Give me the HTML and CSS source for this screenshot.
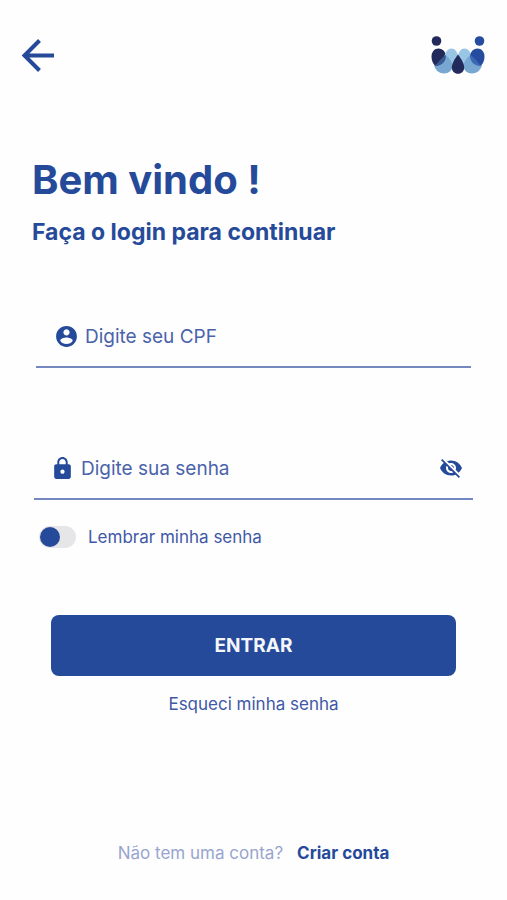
FILE: index.html
```html
<!DOCTYPE html>
<html lang="pt-BR">
<head>
  <meta charset="UTF-8">
  <meta name="viewport" content="width=device-width, initial-scale=1.0">
  <title>Login</title>
  <link rel="stylesheet" href="styles.css">
</head>
<body>
  <header class="topbar">
    <a href="#" class="back" aria-label="Voltar">
      <svg width="34" height="34" viewBox="0 0 34 34" fill="none" stroke="currentColor" stroke-width="4">
        <path d="M33 17.500H4M18.500 2.500L3.500 17.500L18.500 32.500"/>
      </svg>
    </a>
    <svg class="logo" width="54" height="40" viewBox="0 0 54 40" role="img" aria-label="iwi">
      <circle cx="5.500" cy="6" r="4.800" fill="#222a5c"/>
      <circle cx="48.500" cy="6" r="4.800" fill="#264c9f"/>
      <!-- pétalas de cima -->
      <path fill="#222a5c" d="M7.500 13.500C12 13.500 15 17.500 15 22C15 27 11 30.500 6.500 32.500C3 30.500 0.500 26.500 0.500 21.500C0.500 17 3.500 13.500 7.500 13.500Z"/>
      <path fill="#9ac6e6" d="M20.500 13.500C24 13.500 26.500 17 27 21.500L20 33L13 24C13.500 18 16.500 13.500 20.500 13.500Z"/>
      <path fill="#9ac6e6" d="M33.500 13.500C30 13.500 27.500 17 27 21.500L34 33L41 24C40.500 18 37.500 13.500 33.500 13.500Z"/>
      <path fill="#264c9f" d="M46.500 13.500C42 13.500 39 17.500 39 22C39 27 43 30.500 47.500 32.500C51 30.500 53.500 26.500 53.500 21.500C53.500 17 50.500 13.500 46.500 13.500Z"/>
      <!-- pétalas de baixo -->
      <path fill="#78a8d2" d="M14.800 20C19 23.500 21.500 27.500 21.500 31C21.500 35.500 17.500 38.500 13 38.500C8.500 38.500 4.500 35.500 3 30.500C9 31 14 28 14.800 20Z"/>
      <path fill="#78a8d2" d="M39.200 20C35 23.500 32.500 27.500 32.500 31C32.500 35.500 36.500 38.500 41 38.500C45.500 38.500 49.500 35.500 51 30.500C45 31 40 28 39.200 20Z"/>
      <path fill="#3a5b94" d="M14.800 20C15.500 26.500 11 31 3.200 31C7 28.500 9.500 23 14.800 20Z"/>
      <path fill="#3a6ab4" d="M39.200 20C38.500 26.500 43 31 50.800 31C47 28.500 44.500 23 39.200 20Z"/>
      <path fill="#222a5c" d="M27 19.500C30 23.500 33.200 28.500 33.200 32.500C33.200 36 30.500 38.800 27 38.800C23.500 38.800 20.800 36 20.800 32.500C20.800 28.500 24 23.500 27 19.500Z"/>
    </svg>
  </header>

  <main class="content">
    <h1>Bem vindo !</h1>
    <h2>Faça o login para continuar</h2>

    <form class="login">
      <div class="field">
        <label for="cpf" aria-label="CPF">
          <svg width="25" height="25" viewBox="0 0 24 24" fill="currentColor">
            <path d="M12 2C6.480 2 2 6.480 2 12s4.480 10 10 10 10-4.480 10-10S17.520 2 12 2zm0 3c1.660 0 3 1.340 3 3s-1.340 3-3 3-3-1.340-3-3 1.340-3 3-3zm0 14.200c-2.500 0-4.710-1.280-6-3.220.03-1.990 4-3.080 6-3.080 1.990 0 5.970 1.090 6 3.080-1.290 1.940-3.500 3.220-6 3.220z"/>
          </svg>
        </label>
        <input type="text" id="cpf" name="cpf" placeholder="Digite seu CPF">
      </div>

      <div class="field field-senha">
        <label for="senha" aria-label="Senha">
          <svg width="25" height="25" viewBox="0 0 24 24" fill="currentColor">
            <path d="M18 8h-1V6c0-2.760-2.240-5-5-5S7 3.240 7 6v2H6c-1.100 0-2 .9-2 2v10c0 1.100.9 2 2 2h12c1.100 0 2-.9 2-2V10c0-1.100-.9-2-2-2zm-6 9c-1.100 0-2-.9-2-2s.9-2 2-2 2 .9 2 2-.9 2-2 2zm3.100-9H8.900V6c0-1.710 1.390-3.100 3.100-3.100 1.710 0 3.100 1.390 3.100 3.100v2z"/>
          </svg>
        </label>
        <input type="password" id="senha" name="senha" placeholder="Digite sua senha">
        <button type="button" class="ver-senha" aria-label="Mostrar senha">
          <svg width="24" height="24" viewBox="0 0 24 24" fill="currentColor">
            <path d="M12 7c2.760 0 5 2.240 5 5 0 .65-.13 1.260-.36 1.830l2.920 2.920c1.510-1.260 2.700-2.890 3.430-4.750-1.730-4.390-6-7.500-11-7.500-1.400 0-2.740.25-3.980.7l2.160 2.160C10.740 7.130 11.350 7 12 7zM2 4.270l2.280 2.280.46.46C3.080 8.300 1.780 10.020 1 12c1.730 4.390 6 7.500 11 7.500 1.550 0 3.030-.3 4.380-.84l.42.42L19.730 22 21 20.730 3.270 3 2 4.270zM7.530 9.800l1.550 1.550c-.05.21-.08.43-.08.65 0 1.660 1.340 3 3 3 .22 0 .44-.03.65-.08l1.550 1.550c-.67.33-1.410.53-2.200.53-2.760 0-5-2.240-5-5 0-.79.2-1.530.53-2.200zm4.310-.78l3.150 3.150.02-.16c0-1.660-1.340-3-3-3l-.17.01z"/>
          </svg>
        </button>
      </div>

      <div class="lembrar">
        <input type="checkbox" id="lembrar" name="lembrar" class="toggle">
        <label for="lembrar">Lembrar minha senha</label>
      </div>

      <button type="submit" class="btn">ENTRAR</button>
      <a href="#" class="esqueci">Esqueci minha senha</a>
    </form>
  </main>

  <footer class="rodape">
    <span>Não tem uma conta?</span>
    <a href="#">Criar conta</a>
  </footer>
</body>
</html>
```

FILE: styles.css
```css
* {
  box-sizing: border-box;
}

body {
  display: flex;
  flex-direction: column;
  min-height: 100vh;
  margin: 0;
  background-color: #fefefe;
  color: #264a9a;
  font-family: Inter, "Liberation Sans", sans-serif;
}

a {
  color: inherit;
  text-decoration: none;
}

svg {
  display: block;
}

/* barra de cima */
.topbar {
  display: flex;
  justify-content: space-between;
  align-items: center;
  padding: 35px 22px 0 21px;
}

/* conteúdo */
.content {
  padding: 80px 32px 0;
}

h1 {
  margin: 0;
  font-size: 40px;
  font-weight: 700;
  line-height: 50px;
}

h2 {
  margin: 12px 0 0;
  font-size: 23px;
  font-weight: 700;
  line-height: 30px;
}

.login {
  display: flex;
  flex-direction: column;
  margin-top: 59px;
}

/* campos */
.field {
  display: flex;
  align-items: center;
  height: 62px;
  margin: 0 4px;
  padding-left: 18px;
  border-bottom: 2px solid #7488bf;
}

.field-senha {
  margin: 70px 2px 0;
  padding: 0 10px 0 16px;
}

.field input {
  flex: 1;
  min-width: 0;
  padding: 0 0 0 6px;
  border: 0;
  outline: 0;
  background: none;
  color: inherit;
  font-family: inherit;
  font-size: 19px;
}

.field input::placeholder {
  color: #4a63ab;
  opacity: 1;
}

.ver-senha {
  padding: 0;
  border: 0;
  background: none;
  color: inherit;
  cursor: pointer;
}

/* lembrar senha */
.lembrar {
  display: flex;
  align-items: center;
  gap: 12px;
  margin: 26px 7px 0;
  color: #4059a5;
  font-size: 17px;
  line-height: 22px;
}

.toggle {
  appearance: none;
  width: 37px;
  height: 22px;
  margin: 0;
  padding: 1px;
  border-radius: 11px;
  background-color: #e6e6e9;
  cursor: pointer;
}

.toggle::before {
  content: "";
  display: block;
  width: 20px;
  height: 20px;
  border-radius: 50%;
  background-color: #264a9a;
}

.toggle:checked::before {
  margin-left: auto;
}

/* botão */
.btn {
  height: 61px;
  margin: 67px 19px 0;
  border: 0;
  border-radius: 8px;
  background-color: #264a9a;
  color: #f4f6fb;
  font-family: inherit;
  font-size: 19px;
  font-weight: 700;
  cursor: pointer;
}

.esqueci {
  align-self: center;
  margin-top: 17px;
  color: #4059a5;
  font-size: 17px;
  line-height: 22px;
}

/* rodapé */
.rodape {
  display: flex;
  justify-content: center;
  gap: 14px;
  margin-top: auto;
  padding: 32px 0 36px;
  font-size: 17px;
  line-height: 22px;
}

.rodape span {
  color: #98a5cf;
}

.rodape a {
  font-weight: 700;
}
```
